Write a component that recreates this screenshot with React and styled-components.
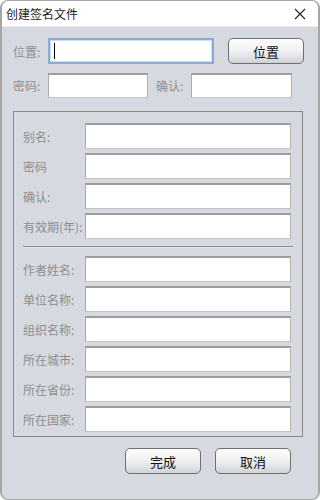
import React from 'react'
import styled, { createGlobalStyle } from 'styled-components'

const GlobalStyle = createGlobalStyle`
  html, body { margin: 0; padding: 0; background: #ffffff; }
  body { font-family: "Noto Sans CJK SC", "Liberation Sans", sans-serif; }
`;

const Window = styled.div`
  box-sizing: border-box;
  width: 320px;
  height: 500px;
  display: flex;
  flex-direction: column;
  background: #d6d9e0;
  border: 1px solid #a6a6a6;
  border-left-width: 2px;
  border-right-width: 2px;
  border-radius: 8px;
  overflow: hidden;
`;

const TitleBar = styled.div`
  height: 25px;
  flex: none;
  display: flex;
  align-items: center;
  justify-content: space-between;
  padding: 0 12px 0 4px;
  background: #ffffff;
  border-bottom: 1px solid #e6e8ec;
`;

const Title = styled.span`
  font-size: 12px;
  color: #1b1b1b;
`;

const Body = styled.div`
  display: flex;
  flex-direction: column;
  padding: 11px 0 0 11px;
`;

const Row = styled.div`
  display: flex;
  align-items: center;
  margin-bottom: ${p => p.$gap || 0}px;
`;

const Label = styled.span`
  width: ${p => p.$w}px;
  flex: none;
  font-size: 12px;
  color: #8e8e8e;
  white-space: nowrap;
`;

const Input = styled.div`
  box-sizing: border-box;
  position: relative;
  width: ${p => p.$w}px;
  height: ${p => p.$h || 26}px;
  flex: none;
  background: #ffffff;
  border-style: solid;
  border-width: 2px 1px 1px 1px;
  border-color: #9c9c9c #b2b2b2 #c4c4c4 #a9a9a9;
  ${p => p.$focus && `
    border: 2px solid #86abd6;
    box-shadow: inset 0 0 0 1px #c9dcf0;
  `}
`;

const Caret = styled.span`
  position: absolute;
  left: 4px;
  top: 3px;
  width: 1px;
  height: 16px;
  background: #000;
`;

const Button = styled.button`
  box-sizing: border-box;
  width: ${p => p.$w || 76}px;
  height: 26px;
  margin-left: ${p => p.$ml || 0}px;
  padding: 0;
  border: 1px solid #6f6f6f;
  border-radius: 5px;
  background: linear-gradient(#fdfdfd 0%, #f1f2f4 45%, #e0e2e6 75%, #cfd1d6 100%);
  box-shadow: inset 0 1px 0 #ffffff;
  font-family: "Noto Sans CJK SC", sans-serif;
  font-size: 13px;
  color: #111;
`;

const Group = styled.div`
  box-sizing: border-box;
  width: 290px;
  height: 326px;
  margin-top: 13px;
  border: 1px solid #8a8a8a;
  padding: 11px 0 0 9px;
  display: flex;
  flex-direction: column;
  gap: 4px;
`;

const Separator = styled.div`
  width: 270px;
  height: 1px;
  background: #8a8a8a;
  border-bottom: 1px solid #e4e6ea;
  margin: 3px 0 4px 0;
`;

const Footer = styled.div`
  display: flex;
  padding: 11px 0 0 112px;
`;

function CloseIcon() {
  return (
    <svg width="12" height="12" viewBox="0 0 12 12">
      <path d="M1 1 L11 11 M11 1 L1 11" stroke="#222" strokeWidth="1.1" fill="none" />
    </svg>
  );
}

const upper = ['别名:', '密码', '确认:', '有效期(年):'];
const lower = ['作者姓名:', '单位名称:', '组织名称:', '所在城市:', '所在省份:', '所在国家:'];

function Field({ label }) {
  return (
    <Row>
      <Label $w={62}>{label}</Label>
      <Input $w={206} />
    </Row>
  );
}

export default function App() {
  return (
    <>
      <GlobalStyle />
      <Window>
        <TitleBar>
          <Title>创建签名文件</Title>
          <CloseIcon />
        </TitleBar>
        <Body>
          <Row $gap={9}>
            <Label $w={35}>位置:</Label>
            <Input $w={166} $focus><Caret /></Input>
            <Button $w={76} $ml={14}>位置</Button>
          </Row>
          <Row>
            <Label $w={35}>密码:</Label>
            <Input $w={100} $h={25} />
            <Label $w={35} style={{ marginLeft: 8 }}>确认:</Label>
            <Input $w={101} $h={25} />
          </Row>
          <Group>
            {upper.map(l => <Field key={l} label={l} />)}
            <Separator />
            {lower.map(l => <Field key={l} label={l} />)}
          </Group>
          <Footer>
            <Button $w={76}>完成</Button>
            <Button $w={76} $ml={14}>取消</Button>
          </Footer>
        </Body>
      </Window>
    </>
  );
}
